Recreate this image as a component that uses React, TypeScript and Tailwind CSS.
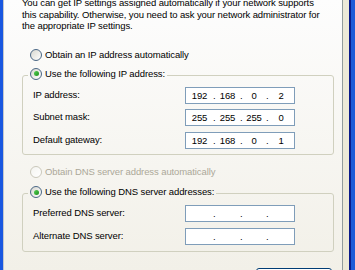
import React from "react";

function Radio({ checked = false, disabled = false }: { checked?: boolean; disabled?: boolean }) {
  return (
    <span
      className={
        "relative flex h-[12px] w-[12px] shrink-0 items-center justify-center rounded-full border bg-linear-to-br " +
        (disabled
          ? "border-[#cac8bb] from-[#f4f4f0] to-white"
          : "border-[#4a6785] from-[#d8d8d0] to-white")
      }
    >
      {checked && (
        <span className="h-[5px] w-[5px] rounded-full bg-linear-to-br from-[#55d155] to-[#1a8f1a]" />
      )}
    </span>
  );
}

function IpBox({ parts }: { parts: [string, string, string, string] }) {
  return (
    <div className="flex h-[17px] w-[110px] items-center border border-[#7f9db9] bg-white leading-none text-black">
      <span className="w-[27px] text-center">{parts[0]}</span>
      <span className="w-[2px] text-center">.</span>
      <span className="w-[25px] text-center">{parts[1]}</span>
      <span className="w-[2px] text-center">.</span>
      <span className="w-[24px] text-center">{parts[2]}</span>
      <span className="w-[2px] text-center">.</span>
      <span className="flex-1 text-center">{parts[3]}</span>
    </div>
  );
}

function Row({ label, parts, className = "" }: { label: string; parts: [string, string, string, string]; className?: string }) {
  return (
    <div className={"flex h-[17px] items-center pl-[10px] " + className}>
      <span className="w-[152px]">{label}</span>
      <IpBox parts={parts} />
    </div>
  );
}

export default function App() {
  return (
    <div
      className="flex h-[270px] w-[355px] overflow-hidden bg-[#ece9d8] text-[9.5px] tracking-[-0.1px] text-black"
      style={{ fontFamily: '"Liberation Sans", Arial, sans-serif' }}
    >
      <div className="w-[3px] shrink-0 bg-[#1957e0]" />
      <div className="flex w-[340px] shrink-0 flex-col border-r border-l border-r-[#919b9c] border-l-[#c4c8cc] bg-linear-to-b from-[#fdfdfd] to-[#f2f0e8] pl-[18px] pr-[8px]">
        <p className="mt-[-3px] leading-[11.5px]">
          You can get IP settings assigned automatically if your network supports
          <br />
          this capability. Otherwise, you need to ask your network administrator for
          <br />
          the appropriate IP settings.
        </p>

        <div className="mt-[17.5px] flex h-[12px] items-center gap-[3px] pl-[8px]">
          <Radio />
          <span>Obtain an IP address automatically</span>
        </div>

        <fieldset className="mt-[6.5px] rounded-[3px] border border-[#d0d0bf] pb-[5px]">
          <legend className="ml-[5px] flex items-center gap-[3px] pb-[3px] pl-[2px] pr-[2px] leading-[12px]">
            <Radio checked />
            <span>Use the following IP address:</span>
          </legend>
          <Row className="mt-[4.5px]" label="IP address:" parts={["192", "168", "0", "2"]} />
          <Row className="mt-[5px]" label="Subnet mask:" parts={["255", "255", "255", "0"]} />
          <Row className="mt-[6px]" label="Default gateway:" parts={["192", "168", "0", "1"]} />
        </fieldset>

        <div className="mt-[11px] flex h-[12px] items-center gap-[3px] pl-[8px] text-[#aca899]">
          <Radio disabled />
          <span>Obtain DNS server address automatically</span>
        </div>

        <fieldset className="mt-[8px] rounded-[3px] border border-[#d0d0bf] pb-[6px]">
          <legend className="ml-[5px] flex items-center gap-[3px] pb-[3px] pl-[2px] pr-[2px] leading-[12px]">
            <Radio checked />
            <span>Use the following DNS server addresses:</span>
          </legend>
          <Row className="mt-[4px]" label="Preferred DNS server:" parts={["", "", "", ""]} />
          <Row className="mt-[6px]" label="Alternate DNS server:" parts={["", "", "", ""]} />
        </fieldset>

        <div className="mt-[16px] flex justify-end pr-[2px]">
          <button className="h-[23px] w-[76px] shrink-0 rounded-[3px] border border-[#003c74] bg-linear-to-b from-white to-[#e6e3d6]">
            Advanced...
          </button>
        </div>
      </div>
      <div className="w-[6px] shrink-0 bg-[#ece9d8]" />
      <div className="w-[2px] shrink-0 bg-[#0a1a8a]" />
      <div className="w-[4px] shrink-0 bg-[#1d5ad8]" />
    </div>
  );
}
